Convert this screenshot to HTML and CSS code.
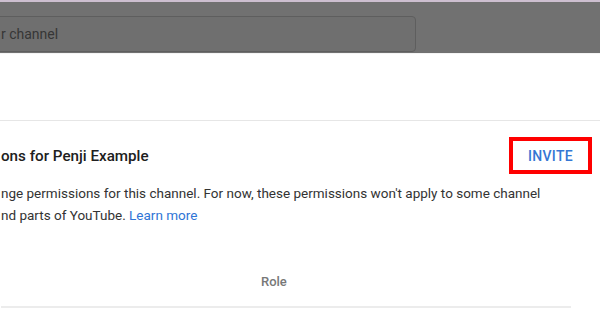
FILE: index.html
```html
<!DOCTYPE html>
<html lang="en">
<head>
    <meta charset="UTF-8">
    <meta name="viewport" content="width=device-width, initial-scale=1.0">
    <title>Permissions</title>
    <link rel="stylesheet" href="styles.css">
</head>
<body>
    <div class="topbar">
        <div class="search">
            <span class="search-text">r channel</span>
        </div>
    </div>
    <div class="page">
        <div class="section">
            <div class="section-head">
                <h2 class="title">ons for Penji Example</h2>
                <button class="invite">INVITE</button>
            </div>
            <p class="desc">
                nge permissions for this channel. For now, these permissions won't apply to some channel<br>
                nd parts of YouTube. <a class="link" href="#">Learn more</a>
            </p>
            <div class="table-head">
                <span class="col-role">Role</span>
            </div>
        </div>
    </div>
</body>
</html>
```

FILE: styles.css
```css
body {
    margin: 0;
    padding: 0;
    background: #ffffff;
    font-family: Roboto, "Noto Sans", Arial, sans-serif;
    color: #282828;
    overflow: hidden;
}
.topbar {
    height: 51px;
    background: #717171;
    border-top: 2px solid #cdbfd0;
    border-bottom: 1px solid #f4f4f4;
    overflow: hidden;
}
.search {
    width: 426px;
    height: 36px;
    margin: 14px 0 0 -10px;
    box-sizing: border-box;
    border: 1px solid #5e5e5e;
    border-radius: 4px;
    background: #6f6f6f;
    display: flex;
    align-items: center;
    padding-left: 10px;
}
.search-text {
    font-size: 14px;
    color: #363636;
}
.page {
    margin-top: 66px;
    border-top: 1px solid #e6e6e6;
}
.section {
    padding-left: 1px;
}
.section-head {
    display: flex;
    justify-content: space-between;
    align-items: center;
    margin-top: 16px;
    padding-right: 8px;
}
.title {
    margin: 0;
    font-size: 15.2px;
    font-weight: 500;
    color: #202020;
}
.invite {
    width: 83px;
    height: 37px;
    border: 4px solid #ff0000;
    background: #ffffff;
    color: #3577d4;
    font-family: Roboto, Arial, sans-serif;
    font-size: 14px;
    font-weight: 500;
    letter-spacing: 0.3px;
    padding: 0;
}
.desc {
    margin: 8px 0 0;
    font-size: 13.5px;
    line-height: 22px;
    color: #333333;
}
.link {
    color: #2f75d6;
    text-decoration: none;
}
.table-head {
    margin-top: 48px;
    margin-right: 29px;
    height: 32px;
    border-bottom: 2px solid #ececec;
    display: flex;
    align-items: flex-start;
}
.col-role {
    margin-left: 260px;
    font-size: 13px;
    font-weight: 500;
    color: #787878;
}
```
